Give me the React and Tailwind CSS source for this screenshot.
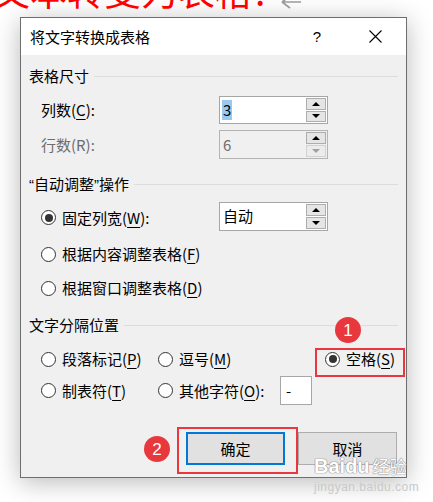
import React from "react";

const Radio = ({ checked }) => (
  <span className="w-[15px] h-[15px] rounded-full border border-[#333] bg-white flex items-center justify-center shrink-0">
    {checked && <span className="w-[8px] h-[8px] rounded-full bg-[#333]" />}
  </span>
);

const U = ({ c }) => <span className="underline underline-offset-[3px] decoration-1">{c}</span>;

const Tri = ({ up, gray }) =>
  up ? (
    <span className={`w-0 h-0 border-x-[4px] border-x-transparent border-b-[4px] ${gray ? "border-b-[#a0a0a0]" : "border-b-black"}`} />
  ) : (
    <span className={`w-0 h-0 border-x-[4px] border-x-transparent border-t-[4px] ${gray ? "border-t-[#a0a0a0]" : "border-t-black"}`} />
  );

const SpinBox = ({ value, disabled, highlight, h = "h-[28px]" }) => (
  <div className={`w-[109px] ${h} border flex ${disabled ? "border-[#b4b4b4] bg-[#f0f0f0]" : "border-[#a6a6a6] bg-white"}`}>
    <div className="flex-1 flex items-center pl-[2px]">
      <span className={`text-[15px] leading-[20px] px-[1px] ${highlight ? "bg-[#99c9ef] text-black" : ""} ${disabled ? "text-[#6d6d6d]" : "text-black"}`}>
        {value}
      </span>
    </div>
    <div className="w-[21px] flex flex-col gap-[1px] py-[1px] pr-[1px]">
      <div className="flex-1 border border-[#adadad] bg-[#e5e5e5] flex items-center justify-center">
        <Tri up />
      </div>
      <div className={`flex-1 border flex items-center justify-center ${disabled ? "border-[#d2d2d2] bg-[#ececec]" : "border-[#adadad] bg-[#e5e5e5]"}`}>
        <Tri gray={disabled} />
      </div>
    </div>
  </div>
);

const GroupHeader = ({ children, mt }) => (
  <div className={`flex items-center h-[20px] pl-[8px] pr-[8px] ${mt}`}>
    <span className="text-[15px] leading-[20px] text-black whitespace-nowrap">{children}</span>
    <div className="flex-1 h-px bg-[#dcdcdc] ml-[5px]" />
  </div>
);

const RadioLabel = ({ checked, children }) => (
  <div className="flex items-center gap-[6px]">
    <Radio checked={checked} />
    <span className="text-[15px] leading-[20px] text-black whitespace-nowrap">{children}</span>
  </div>
);

const Q = ({ c }) => <span className="font-['Liberation_Sans',sans-serif]">{c}</span>;

export default function App() {
  return (
    <div className="relative w-[433px] h-[502px] overflow-hidden bg-white font-['Noto_Sans_CJK_SC','Microsoft_YaHei',sans-serif]">
      {/* top red heading, cut off */}
      <div className="flex h-[17px]">
        <div className="flex items-start -mt-[28px] -ml-[7px] whitespace-nowrap">
          <span className="text-[37px] leading-[37px] text-[#ff0000]">文本转变为表格?</span>
          <svg width="22" height="14" viewBox="0 0 22 14" className="mt-[24px] ml-[10px]">
            <path d="M2 6 L10 0 M2 6 L10 12 M2 6 H21" stroke="#9a9a9a" strokeWidth="1.6" fill="none" />
          </svg>
        </div>
      </div>

      {/* dialog */}
      <div className="ml-[20px] w-[387px] h-[461px] border border-[#6e6e6e] bg-[#f0f0f0] flex flex-col shadow-[0_4px_24px_rgba(0,0,0,0.28)]">
        {/* title bar */}
        <div className="h-[37px] bg-white flex items-center pl-[9px] shrink-0">
          <span className="text-[15px] leading-[20px] text-black">将文字转换成表格</span>
          <span className="flex-1" />
          <span className="text-[15px] leading-[20px] text-black font-['Liberation_Sans',sans-serif]">?</span>
          <svg width="13" height="13" viewBox="0 0 13 13" className="ml-[48px] mr-[24px]">
            <path d="M0.5 0.5 L12.5 12.5 M12.5 0.5 L0.5 12.5" stroke="#000" strokeWidth="1.1" />
          </svg>
        </div>

        {/* body */}
        <div className="flex flex-col">
          <GroupHeader mt="mt-[11px]">表格尺寸</GroupHeader>
          <div className="flex items-center pl-[20px] mt-[10px]">
            <span className="w-[178px] text-[15px] leading-[20px] text-black">
              列数(<U c="C" />):
            </span>
            <SpinBox value="3" highlight />
          </div>
          <div className="flex items-center pl-[20px] mt-[6px]">
            <span className="w-[178px] text-[15px] leading-[20px] text-[#6d6d6d]">行数(R):</span>
            <SpinBox value="6" disabled h="h-[29px]" />
          </div>

          <GroupHeader mt="mt-[15px]">
            <Q c="“" />自动调整<Q c="”" />操作
          </GroupHeader>
          <div className="flex items-center pl-[20px] mt-[9px] h-[29px]">
            <div className="w-[178px]">
              <RadioLabel checked>
                固定列宽(<U c="W" />):
              </RadioLabel>
            </div>
            <div className="-mt-[3px]">
              <SpinBox value="自动" h="h-[29px]" />
            </div>
          </div>
          <div className="pl-[20px] mt-[12px]">
            <RadioLabel>
              根据内容调整表格(<U c="F" />)
            </RadioLabel>
          </div>
          <div className="pl-[20px] mt-[14px]">
            <RadioLabel>
              根据窗口调整表格(<U c="D" />)
            </RadioLabel>
          </div>

          <GroupHeader mt="mt-[17px]">文字分隔位置</GroupHeader>
          <div className="flex items-center pl-[20px] mt-[14px] h-[20px]">
            <div className="w-[117px]">
              <RadioLabel>
                段落标记(<U c="P" />)
              </RadioLabel>
            </div>
            <div className="w-[167px]">
              <RadioLabel>
                逗号(<U c="M" />)
              </RadioLabel>
            </div>
            <RadioLabel checked>
              空格(<U c="S" />)
            </RadioLabel>
          </div>
          <div className="flex items-center pl-[20px] mt-[7px] h-[29px]">
            <div className="w-[117px]">
              <RadioLabel>
                制表符(<U c="T" />)
              </RadioLabel>
            </div>
            <div className="w-[122px]">
              <RadioLabel>
                其他字符(<U c="O" />):
              </RadioLabel>
            </div>
            <div className="w-[32px] h-[29px] border border-[#a6a6a6] bg-white flex items-center pl-[5px] text-[15px] leading-[20px] text-black">
              -
            </div>
          </div>

          <div className="flex justify-end gap-[13px] pr-[9px] mt-[27px]">
            <button className="w-[99px] h-[33px] border-2 border-[#0078d7] bg-[#e1e1e1] text-[15px] leading-[20px] text-black">
              确定
            </button>
            <button className="w-[99px] h-[33px] border border-[#adadad] bg-[#e1e1e1] text-[15px] leading-[20px] text-black">
              取消
            </button>
          </div>
        </div>
      </div>

      {/* annotations */}
      <div className="absolute left-[315px] top-[348px] w-[90px] h-[29px] border-2 border-[#e8383d]" />
      <div className="absolute left-[335px] top-[317px] w-[26px] h-[26px] rounded-full bg-[#e8383d] flex items-center justify-center text-white text-[17px] leading-none font-['Liberation_Sans',sans-serif]">
        1
      </div>
      <div className="absolute left-[177px] top-[427px] w-[121px] h-[47px] border-2 border-[#e8383d]" />
      <div className="absolute left-[144px] top-[436px] w-[26px] h-[26px] rounded-full bg-[#e8383d] flex items-center justify-center text-white text-[17px] leading-none font-['Liberation_Sans',sans-serif]">
        2
      </div>

      {/* watermark */}
      <div className="absolute left-[314px] top-[455px] flex flex-col items-start">
        <div className="flex items-center text-[20px] leading-[22px] font-bold text-white [text-shadow:0_0_1px_#8a8a8a,0_0_1px_#8a8a8a,0_0_1px_#8a8a8a]">
          <span className="font-['Liberation_Sans',sans-serif]">Bai</span>
          <span className="font-['Liberation_Sans',sans-serif]">du</span>
          <span className="ml-[3px] text-[17px] font-normal">经验</span>
        </div>
        <div className="text-[12px] leading-[14px] mt-[3px] text-[#c9c9c9] font-['Liberation_Sans',sans-serif] tracking-[0.5px]">
          jingyan.baidu.com
        </div>
      </div>
    </div>
  );
}
